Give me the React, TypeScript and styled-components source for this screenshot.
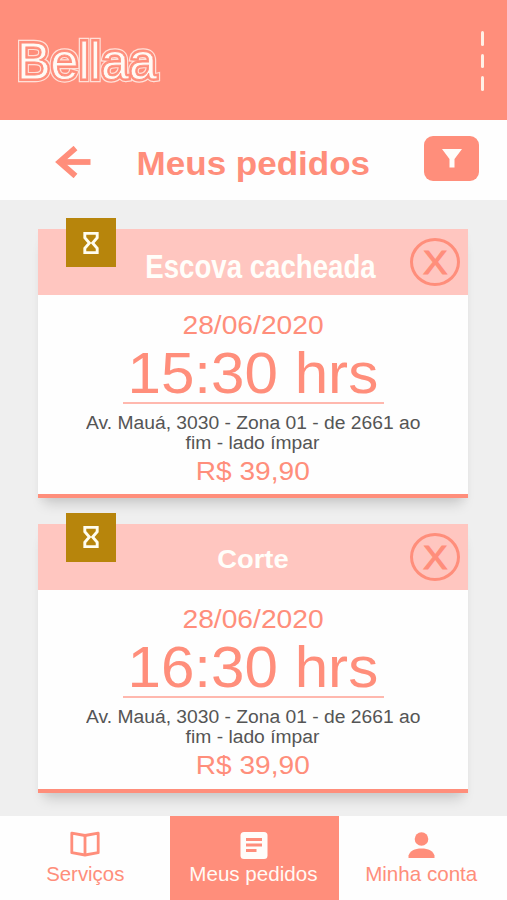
import React from "react";
import styled, { createGlobalStyle } from "styled-components";

const coral = "#ff8e7b";
const blush = "#ffc6c0";

const GlobalStyle = createGlobalStyle`
  * { box-sizing: border-box; }
  body {
    margin: 0;
    background: #efefef;
    font-family: "Liberation Sans", Arial, sans-serif;
  }
`;

const Screen = styled.div`
  display: flex;
  flex-direction: column;
  width: 507px;
  height: 900px;
  overflow: hidden;
  background: #efefef;
`;

const TopBar = styled.header`
  display: flex;
  justify-content: space-between;
  flex: 0 0 120px;
  padding: 30px 23px 0 14px;
  background: ${coral};
`;

const Logo = styled.svg`
  width: 150px;
  height: 60px;
  overflow: visible;
  font-size: 52px;
`;

const MenuButton = styled.button`
  display: flex;
  flex-direction: column;
  gap: 8px;
  padding: 1px 0 0;
  border: 0;
  background: none;
`;

const Dash = styled.span`
  width: 3.5px;
  height: 14.5px;
  border-radius: 1.5px;
  background: #fff0e6;
`;

const TitleBar = styled.div`
  display: flex;
  align-items: center;
  flex: 0 0 80px;
  padding: 0 28px 0 55px;
  background: #fefefe;
`;

const BackIcon = styled.svg`
  width: 36px;
  height: 32px;
  margin-top: 4px;
`;

const Scaled = styled.span<{ $x?: number }>`
  display: inline-block;
  white-space: nowrap;
  transform: scaleX(${(p) => p.$x ?? 1});
`;

const PageTitle = styled.h1`
  flex: 1;
  margin: 5px 0 0 -8px;
  color: ${coral};
  font-size: 34px;
  line-height: 40px;
  text-align: center;
`;

const FilterButton = styled.button`
  display: flex;
  justify-content: center;
  width: 55px;
  height: 45px;
  margin-top: -3px;
  padding: 13px 0 0;
  border: 0;
  border-radius: 9px;
  background: ${coral};
`;

const Orders = styled.main`
  display: flex;
  flex-direction: column;
  flex: 1;
  gap: 25.5px;
  padding: 29px 39px 0 38px;
`;

const Card = styled.article`
  position: relative;
  flex: 0 0 269px;
  border-bottom: 4px solid ${coral};
  background: #fefefe;
  box-shadow: 0 12px 12px -6px rgba(0, 0, 0, 0.15), 0 4px 6px rgba(0, 0, 0, 0.025);
`;

const CardHeader = styled.div`
  display: flex;
  align-items: center;
  height: 66px;
  padding: 0 8px 0 58px;
  background: ${blush};
`;

const CardTitle = styled.h2<{ $size: number; $shift: number; $drop: number }>`
  display: flex;
  justify-content: center;
  flex: 1;
  width: 0;
  margin: 0;
  padding: ${(p) => p.$drop}px 0 0 ${(p) => p.$shift}px;
  color: #fffefa;
  font-size: ${(p) => p.$size}px;
  line-height: 40px;
`;

const Badge = styled.div`
  position: absolute;
  top: -11px;
  left: 28px;
  display: flex;
  align-items: center;
  justify-content: center;
  width: 50px;
  height: 49px;
  background: #b7850c;
`;

const CancelButton = styled.button`
  flex: none;
  display: flex;
  align-items: center;
  justify-content: center;
  width: 50px;
  height: 48px;
  padding: 0;
  border: 3.5px solid ${coral};
  border-radius: 50%;
  background: none;
  color: ${coral};
  font: 34px/40px "Liberation Sans", Arial, sans-serif;
  -webkit-text-stroke: 1.2px ${coral};
`;

const CardBody = styled.div`
  display: flex;
  flex-direction: column;
  align-items: center;
  padding-top: 14.5px;
  color: ${coral};
`;

const Figure = styled.div`
  font-size: 26px;
  line-height: 30px;
`;

const Time = styled.div`
  width: 261px;
  height: 64px;
  border-bottom: 2px solid #ffb8ae;
  font-size: 57px;
  line-height: 67px;
  text-align: center;
`;

const Address = styled.address`
  display: flex;
  flex-direction: column;
  align-items: center;
  margin: 9px 0 3px;
  color: #555;
  font-size: 18px;
  font-style: normal;
  line-height: 20px;
`;

const NavBar = styled.nav`
  display: grid;
  grid-template-columns: 169.5px 169.5px 1fr;
  flex: 0 0 84px;
`;

const NavItem = styled.a<{ $active?: boolean }>`
  display: flex;
  flex-direction: column;
  align-items: center;
  padding: 12px 1.5px 0 0;
  background: ${(p) => (p.$active ? coral : "#fefefe")};
  color: ${(p) => (p.$active ? "#fffaf5" : coral)};
  font-size: 21px;
  line-height: 24px;

  &:first-child {
    padding: 12px 0 0 1px;
  }

  &:last-child {
    padding-right: 4px;
  }

  svg {
    width: 36px;
    height: 34px;
  }
`;

const Hourglass = () => (
  <svg width="16" height="24" viewBox="0 0 16 24" fill="none" stroke="#fffdf0" strokeWidth="2.9">
    <path d="M1.8 2.4h12.4v4.4L9.6 12l4.6 5.2v4.4H1.8v-4.4L6.4 12 1.8 6.8z" />
  </svg>
);

type Order = {
  title: string;
  size: number;
  scale: number;
  shift: number;
  drop: number;
  time: string;
};

const orders: Order[] = [
  { title: "Escova cacheada", size: 32.5, scale: 0.85, shift: 14.5, drop: 9, time: "15:30 hrs" },
  { title: "Corte", size: 26, scale: 1.05, shift: 0, drop: 5, time: "16:30 hrs" },
];

const OrderCard = ({ order }: { order: Order }) => (
  <Card>
    <CardHeader>
      <CardTitle $size={order.size} $shift={order.shift} $drop={order.drop}>
        <Scaled $x={order.scale}>{order.title}</Scaled>
      </CardTitle>
      <CancelButton aria-label="Cancelar">
        <Scaled $x={1.06}>X</Scaled>
      </CancelButton>
    </CardHeader>
    <Badge>
      <Hourglass />
    </Badge>
    <CardBody>
      <Figure><Scaled $x={1.085}>28/06/2020</Scaled></Figure>
      <Time><Scaled $x={1.055}>{order.time}</Scaled></Time>
      <Address>
        <Scaled $x={1.07}>Av. Mauá, 3030 - Zona 01 - de 2661 ao</Scaled>
        <Scaled $x={1.07}>fim - lado ímpar</Scaled>
      </Address>
      <Figure><Scaled $x={1.08}>R$ 39,90</Scaled></Figure>
    </CardBody>
  </Card>
);

const LogoLayer = styled.text<{ $fill: string; $edge: string; $width: number }>`
  fill: ${(p) => p.$fill};
  stroke: ${(p) => p.$edge};
  stroke-width: ${(p) => p.$width}px;
`;

const logoText = { x: 3, y: 49, textLength: 140, lengthAdjust: "spacingAndGlyphs" as const };

export default function App() {
  return (
    <>
      <GlobalStyle />
      <Screen>
        <TopBar>
          <Logo aria-label="Bellaa">
            <LogoLayer {...logoText} $fill="#ffe0d8" $edge="#ffe0d8" $width={6.4}>Bellaa</LogoLayer>
            <LogoLayer {...logoText} $fill={coral} $edge={coral} $width={4} aria-hidden="true">Bellaa</LogoLayer>
            <LogoLayer {...logoText} $fill="#fffaf5" $edge={coral} $width={0.8} aria-hidden="true">Bellaa</LogoLayer>
          </Logo>
          <MenuButton aria-label="Menu">
            <Dash />
            <Dash />
            <Dash />
          </MenuButton>
        </TopBar>
        <TitleBar>
          <BackIcon viewBox="0 0 36 32" fill="none" stroke={coral} strokeWidth="5.8">
            <path d="M35.5 16H5" />
            <path d="M20.5 2L4.5 16l16 14" />
          </BackIcon>
          <PageTitle><Scaled $x={1.03}>Meus pedidos</Scaled></PageTitle>
          <FilterButton aria-label="Filtrar">
            <svg width="20" height="19" viewBox="0 0 20 19" fill="#fffdfa">
              <path d="M0 0h20l-7.5 10v8.5h-5V10z" />
            </svg>
          </FilterButton>
        </TitleBar>
        <Orders>
          {orders.map((order) => (
            <OrderCard key={order.title} order={order} />
          ))}
        </Orders>
        <NavBar>
          <NavItem>
            <svg viewBox="0 0 36 34" fill="none" stroke={coral} strokeWidth="2.8" strokeLinejoin="round">
              <path d="M4.8 5.2L18 7.5l13.2-2.3v19.5L18 27 4.8 24.7z" />
              <path d="M18 7.5V27" />
            </svg>
            <Scaled $x={0.97}>Serviços</Scaled>
          </NavItem>
          <NavItem $active>
            <svg viewBox="0 0 36 34">
              <rect x="4.5" y="4" width="27" height="27" rx="3.5" fill="#fffdfa" />
              <path d="M10 11.5h16M10 17h16M10 22.5h10.5" stroke={coral} strokeWidth="2.8" />
            </svg>
            <Scaled $x={0.98}>Meus pedidos</Scaled>
          </NavItem>
          <NavItem>
            <svg viewBox="0 0 36 34" fill={coral}>
              <circle cx="18.5" cy="11" r="6.8" />
              <path d="M5.5 30v-2.5C7 23 11.5 20.5 18.5 20.5S30 23 31.5 27.5V30z" />
            </svg>
            <Scaled $x={0.98}>Minha conta</Scaled>
          </NavItem>
        </NavBar>
      </Screen>
    </>
  );
}
